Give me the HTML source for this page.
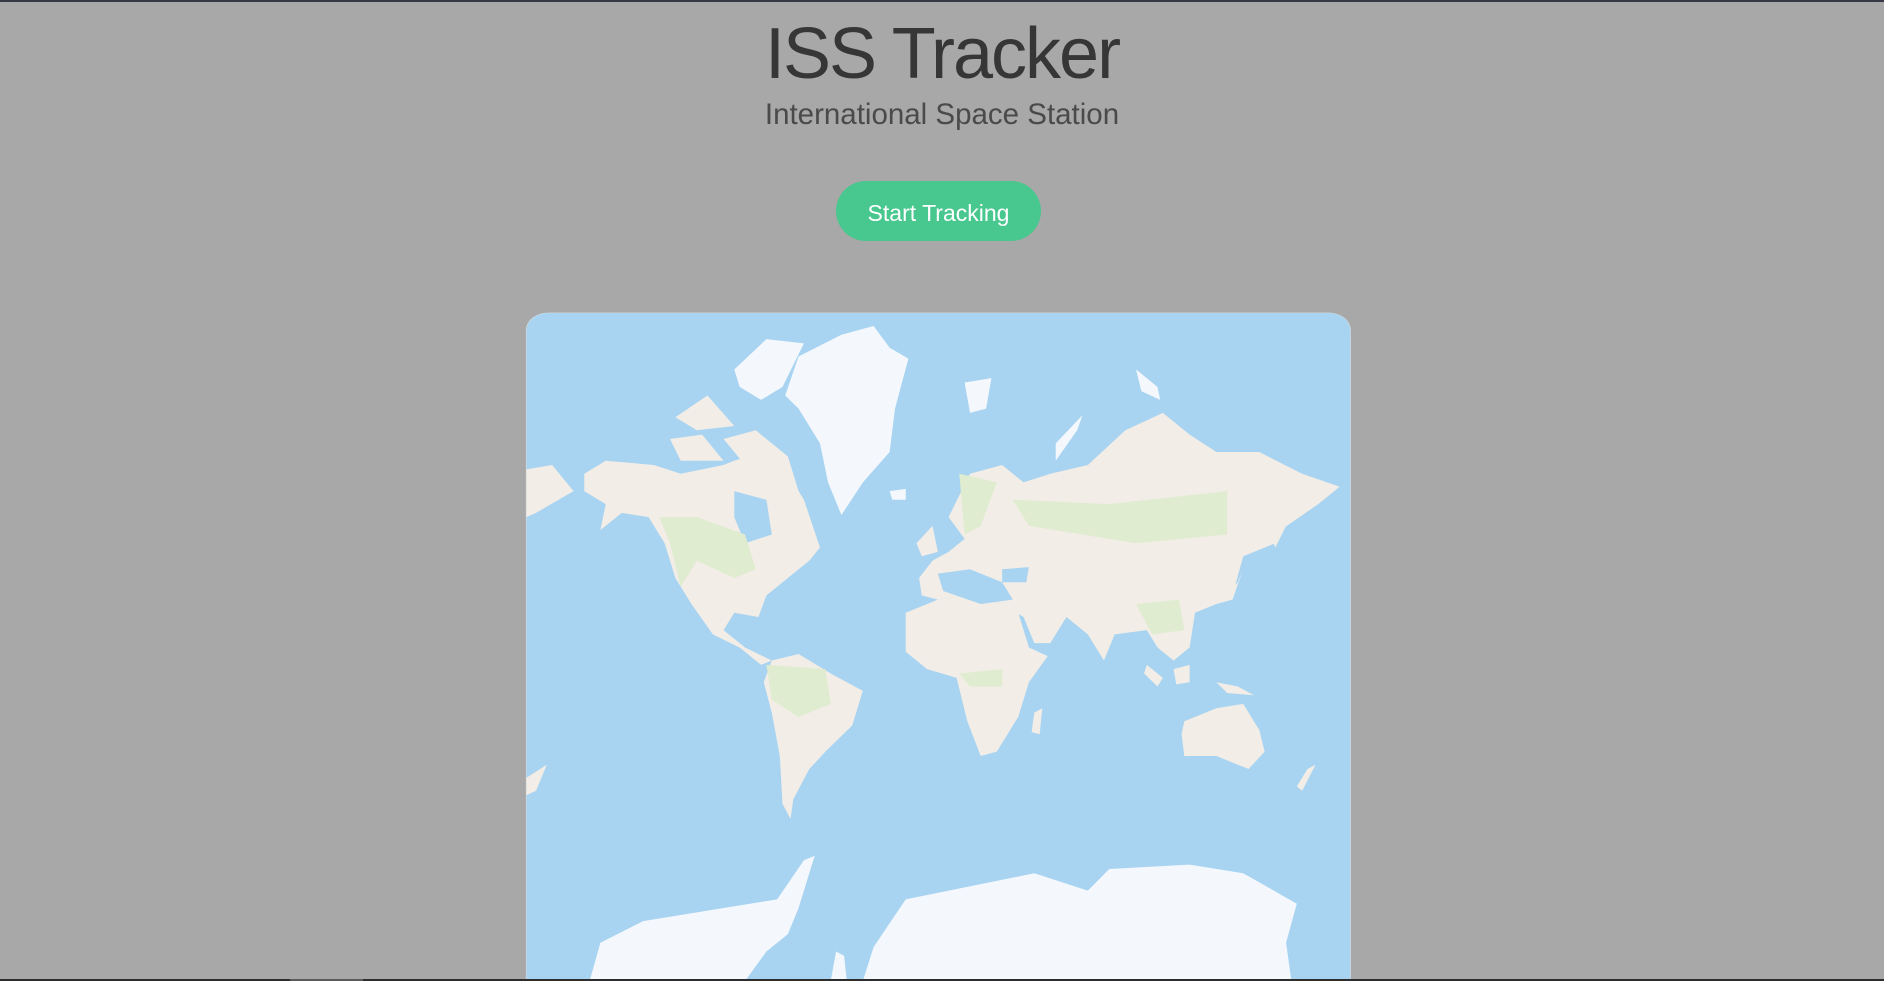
<!DOCTYPE html>
<html><head><meta charset="utf-8"><style>
html,body{margin:0;padding:0;}
body{width:1884px;height:981px;background:#a8a8a8;position:relative;overflow:hidden;font-family:"Liberation Sans",sans-serif;}
.top{position:absolute;left:0;top:0;width:1884px;height:2px;background:#363845;}
.bot{position:absolute;left:0;top:979px;width:1884px;height:2px;background:#2d2d2d;}
.bot2{position:absolute;left:290px;top:979px;width:73px;height:2px;background:#5a5a5a;}
h1{position:absolute;left:0;width:1884px;top:10px;margin:0;text-align:center;font-size:72px;font-weight:normal;color:#363636;letter-spacing:-2px;line-height:88px;}
.sub{position:absolute;left:0;width:1884px;top:98px;text-align:center;font-size:29.5px;color:#4a4a4a;line-height:34px;}
.btn{position:absolute;left:836px;top:181px;width:205px;height:60px;border-radius:30px;background:#48c78e;color:#fff;font-size:23px;text-align:center;line-height:64px;}
svg{position:absolute;left:520px;top:300px;}
</style></head><body>
<div class="top"></div>
<h1>ISS Tracker</h1>
<div class="sub">International Space Station</div>
<div class="btn">Start Tracking</div>
<svg width="840" height="681" viewBox="0 0 1568 1568" preserveAspectRatio="none">
<defs><clipPath id="c"><rect x="12" y="30" width="1538" height="1600" rx="40" ry="40"/></clipPath></defs>
<rect x="11" y="29" width="1540" height="1600" rx="41" ry="41" fill="#dcdcdc"/>
<g clip-path="url(#c)">
<rect x="0" y="0" width="1568" height="1568" fill="#a8d4f2"/>
<g fill="#f2ede6">
<polygon points="120,400 160,370 250,380 300,400 380,380 400,370 450,350 500,400 530,460 560,570 540,600 500,640 460,680 445,730 400,720 380,760 420,800 470,830 450,840 410,800 360,770 320,700 290,640 270,560 240,500 190,490 150,530 160,470 120,440"/>
<polygon points="12,390 60,380 100,440 30,490 12,500"/>
<polygon points="290,270 350,220 400,290 330,300"/>
<polygon points="280,320 340,310 380,370 300,370"/>
<polygon points="380,320 440,300 500,360 520,440 470,420 420,380"/>
<polygon points="470,830 520,815 580,860 640,900 620,980 570,1040 540,1080 510,1150 505,1195 490,1160 485,1050 470,950 455,880"/>
<polygon points="720,720 780,690 840,680 900,700 930,720 950,800 985,820 950,880 930,960 890,1040 860,1050 835,970 815,870 760,850 720,810"/>
<polygon points="960,950 975,940 970,1000 955,995"/>
<polygon points="800,500 840,400 900,380 940,420 990,400 1060,380 1130,300 1200,260 1250,310 1300,350 1380,350 1460,400 1530,430 1490,470 1420,530 1410,560 1350,590 1330,680 1300,700 1260,720 1250,800 1220,830 1190,800 1170,760 1110,770 1090,830 1060,770 1020,730 990,790 960,790 940,730 900,700 840,680 780,690 750,680 745,640 770,600 800,580 830,550"/>
<polygon points="740,560 770,520 780,580 750,590"/>
<polygon points="1300,700 1340,650 1350,620 1330,690"/>
<polygon points="1400,540 1420,480 1430,520 1410,570"/>
<polygon points="1170,840 1200,870 1190,890 1165,860"/>
<polygon points="1220,850 1250,840 1250,880 1225,885"/>
<polygon points="1300,880 1340,890 1370,910 1320,905"/>
<polygon points="1240,970 1300,940 1350,930 1380,990 1390,1040 1360,1080 1300,1050 1240,1050 1235,1000"/>
<polygon points="1470,1080 1485,1070 1460,1130 1450,1120"/>
<polygon points="12,1100 50,1070 30,1130 12,1140"/>
</g>
<g fill="#a8d4f2">
<polygon points="400,440 460,460 470,540 420,560 400,500"/>
<polygon points="780,630 840,620 900,650 920,690 860,700 790,670"/>
<polygon points="900,620 950,615 945,650 900,650"/>
<polygon points="410,740 450,730 460,770 420,780"/>
</g>
<g fill="#dfeccf">
<polygon points="260,500 330,500 420,540 440,620 400,640 330,600 300,660 280,560"/>
<polygon points="460,840 570,850 580,930 520,960 470,920"/>
<polygon points="920,460 1100,470 1320,440 1320,540 1150,560 950,520"/>
<polygon points="820,860 900,850 900,890 840,890"/>
<polygon points="1150,700 1230,690 1240,760 1180,770"/>
<polygon points="820,400 890,420 860,520 830,540"/>
</g>
<g fill="#f4f8fd">
<polygon points="520,130 600,80 660,60 690,110 725,135 700,250 690,350 640,420 600,495 575,420 560,330 520,250 495,220"/>
<polygon points="400,160 460,90 530,100 490,200 450,230 410,200"/>
<polygon points="830,190 880,180 870,250 840,260"/>
<polygon points="1150,160 1190,200 1195,230 1160,210"/>
<polygon points="1000,330 1050,265 1040,300 1000,370"/>
<polygon points="690,440 720,435 720,460 695,460"/>
<polygon points="640,1568 660,1490 720,1380 800,1360 960,1320 1060,1360 1100,1310 1250,1300 1350,1320 1450,1390 1430,1480 1440,1568"/>
<polygon points="130,1568 150,1480 230,1430 380,1400 480,1380 530,1290 550,1280 520,1400 500,1460 460,1500 420,1568"/>
<polygon points="580,1568 590,1500 605,1510 610,1568"/>
</g>
</g>
</svg>
<div class="bot"></div><div class="bot2"></div>
</body></html>
